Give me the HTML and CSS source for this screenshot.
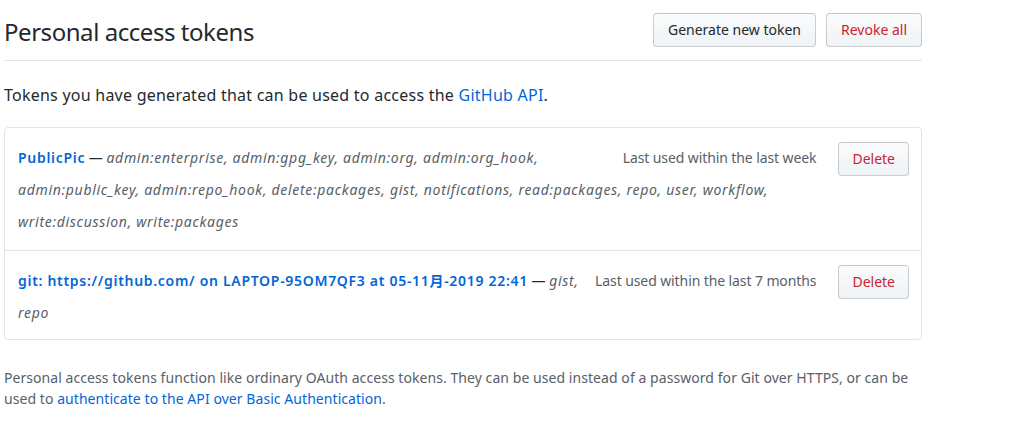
FILE: index.html
```html
<!DOCTYPE html>
<html lang="en">
<head>
<meta charset="utf-8">
<title>Personal access tokens</title>
<link rel="stylesheet" href="styles.css">
</head>
<body>
<div class="page">
  <div class="subhead">
    <h2 class="subhead-title">Personal access tokens</h2>
    <div class="subhead-actions">
      <a class="btn" href="#">Generate new token</a>
      <a class="btn btn-danger" href="#">Revoke all</a>
    </div>
  </div>
  <p class="intro">Tokens you have generated that can be used to access the <a href="#">GitHub API</a>.</p>
  <div class="box">
    <div class="row">
      <a class="btn btn-danger btn-sm" href="#">Delete</a>
      <span class="last-used">Last used within the last week</span>
      <span class="token-desc"><a class="token-name" href="#">PublicPic</a> — <em class="scopes">admin:enterprise, admin:gpg_key, admin:org, admin:org_hook, admin:public_key, admin:repo_hook, delete:packages, gist, notifications, read:packages, repo, user, workflow, write:discussion, write:packages</em></span>
    </div>
    <div class="row">
      <a class="btn btn-danger btn-sm" href="#">Delete</a>
      <span class="last-used">Last used within the last 7 months</span>
      <span class="token-desc"><a class="token-name" href="#">git: https://github.com/ on LAPTOP-95OM7QF3 at 05-11月-2019 22:41</a> — <em class="scopes">gist, repo</em></span>
    </div>
  </div>
  <p class="note">Personal access tokens function like ordinary OAuth access tokens. They can be used instead of a password for Git over HTTPS, or can be used to <a href="#">authenticate to the API over Basic Authentication</a>.</p>
</div>
</body>
</html>
```

FILE: styles.css
```css
* { box-sizing: border-box; }
html, body { margin: 0; padding: 0; background: #fff; }
body {
  font-family: "Noto Sans", "Noto Sans CJK SC", sans-serif;
  color: #24292e;
  font-size: 14px;
}
a { color: #0366d6; text-decoration: none; }
.page { width: 918px; margin-left: 4px; }

.subhead {
  display: flex;
  align-items: flex-start;
  justify-content: space-between;
  padding-top: 13px;
  padding-bottom: 11px;
  border-bottom: 1px solid #e1e4e8;
}
.subhead-title {
  margin: 0;
  font-size: 24px;
  font-weight: 400;
  line-height: 34px;
  padding-top: 2px;
  letter-spacing: -0.45px;
}
.subhead-actions { display: flex; gap: 10px; }

.btn {
  display: inline-block;
  height: 34px;
  padding: 0 14px;
  line-height: 32px;
  font-size: 14px;
  color: #24292e;
  background: linear-gradient(#fafbfc, #eff3f6);
  border: 1px solid rgba(27,31,35,0.2);
  border-radius: 4px;
  white-space: nowrap;
}
.btn-danger { color: #cb2431; }

.intro {
  margin: 22px 0 20px;
  font-size: 16px;
  line-height: 24px;
  letter-spacing: 0.24px;
}

.box {
  border: 1px solid #e1e4e8;
  border-radius: 4px;
}
.row {
  padding: 14px 12px 12px 13px;
  line-height: 32px;
  display: flow-root;
}
.row + .row { border-top: 1px solid #e1e4e8; padding-bottom: 10px; }
.btn-sm {
  float: right;
  margin-top: 0;
  margin-left: 22px;
  padding: 0 13px;
}
.last-used {
  float: right;
  color: #586069;
  margin-left: 10px;
  letter-spacing: -0.1px;
}
.token-name { font-weight: 600; letter-spacing: 0.7px; }
.scopes { color: #586069; letter-spacing: 0.7px; }

.note {
  margin: 27px 0 0;
  color: #586069;
  line-height: 21px;
  letter-spacing: 0.06px;
}
```
